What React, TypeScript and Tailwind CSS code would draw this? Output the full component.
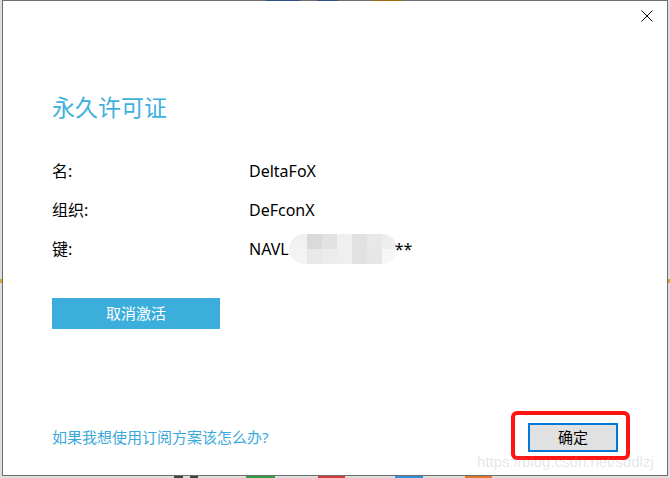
const FONT = { fontFamily: '"Noto Sans", "Noto Sans CJK SC", sans-serif' };

const BLUR_TOP = ["#f1f1f0", "#d9dadc", "#e3e2e2", "#f0f0f0", "#e2e1e2", "#e9e8e9", "#eeeeee"];
const BLUR_BOT = ["#f3f3f3", "#e7e8e9", "#ececec", "#efefef", "#e1e1e2", "#e6e6e6", "#f7f7f7"];

function BlurBlock() {
  return (
    <div className="flex flex-col w-[108px] h-[30px] rounded-[15px] overflow-hidden">
      <div className="flex h-[15px]">
        <div className="w-[18px]" style={{ background: BLUR_TOP[0] }} />
        {BLUR_TOP.slice(1).map((c, i) => (
          <div key={i} className="w-[15px]" style={{ background: c }} />
        ))}
      </div>
      <div className="flex h-[15px]">
        <div className="w-[18px]" style={{ background: BLUR_BOT[0] }} />
        {BLUR_BOT.slice(1).map((c, i) => (
          <div key={i} className="w-[15px]" style={{ background: c }} />
        ))}
      </div>
    </div>
  );
}

export default function App() {
  return (
    <div className="relative w-[670px] h-[478px] bg-[#dedede] overflow-hidden flex" style={FONT}>
      {/* desktop bits peeking around the window */}
      <div className="absolute left-0 top-[279px] w-[3px] h-[4px] bg-[#d9a23a]" />
      <div className="absolute right-0 top-[279px] w-[3px] h-[4px] bg-[#d9a23a]" />
      <div className="absolute top-[476px] left-[174px] w-[9px] h-[2px] bg-[#404040]" />
      <div className="absolute top-[476px] left-[190px] w-[8px] h-[2px] bg-[#404040]" />
      <div className="absolute top-[476px] left-[246px] w-[29px] h-[2px] bg-[#2ea043]" />
      <div className="absolute top-[476px] left-[318px] w-[27px] h-[2px] bg-[#d33a3a]" />
      <div className="absolute top-[476px] left-[395px] w-[28px] h-[2px] bg-[#2f8fd8]" />
      <div className="absolute top-[476px] left-[465px] w-[27px] h-[2px] bg-[#e0782a]" />

      {/* dialog */}
      <div className="relative ml-[2px] w-[666px] h-[476px] bg-white border border-[#6e6e6e] flex flex-col">
        <div className="absolute -top-px left-[263px] w-[34px] h-[1px] bg-[#2f4f8a]" />
        <div className="absolute -top-px left-[314px] w-[21px] h-[1px] bg-[#2f4f8a]" />
        <div className="absolute -top-px left-[369px] w-[30px] h-[1px] bg-[#9a6a10]" />

        {/* close */}
        <div className="flex justify-end pr-[14px] pt-[9px]">
          <svg width="12" height="12" viewBox="0 0 12 12">
            <path d="M0.5 0.5 L11.5 11.5 M11.5 0.5 L0.5 11.5" stroke="#000" strokeWidth="1" />
          </svg>
        </div>

        <div className="flex flex-col flex-1 pl-[49px]">
          <h1 className="mt-[70px] text-[23px] leading-[30px] text-[#3eb0dd] font-normal">永久许可证</h1>

          <div className="mt-[29px] flex flex-col text-[16px] text-black">
            <div className="flex items-center h-[39px]">
              <span className="w-[197px]">名:</span>
              <span>DeltaFoX</span>
            </div>
            <div className="flex items-center h-[39px]">
              <span className="w-[197px]">组织:</span>
              <span>DeFconX</span>
            </div>
            <div className="flex items-center h-[39px]">
              <span className="w-[197px]">键:</span>
              <span>NAVL</span>
              <BlurBlock />
              <span className="-ml-[2px]">**</span>
            </div>
          </div>

          <button className="mt-[30px] w-[168px] h-[31px] bg-[#3baedc] text-white text-[15px] leading-none flex items-center justify-center">
            取消激活
          </button>

          <div className="flex-1" />

          <div className="flex justify-between items-start pr-[37px] mb-[15px]">
            <a className="mt-[16px] text-[15px] leading-[21px] text-[#3ba9da]">如果我想使用订阅方案该怎么办?</a>
            <div className="w-[119px] h-[49px] border-4 border-[#ff1414] rounded-[6px] pl-[13px] pt-[8px]">
              <button className="w-[90px] h-[29px] border-2 border-[#0078d7] bg-[#e1e1e1] text-[15px] text-black leading-none flex items-center justify-center">
                确定
              </button>
            </div>
          </div>
        </div>
      </div>

      {/* watermark */}
      <div
        className="absolute left-[477px] top-[452px] text-[15px] leading-[20px] text-[rgba(150,150,150,0.25)]"
        style={{ fontFamily: '"Liberation Sans", Arial, sans-serif' }}
      >
        https://blog.csdn.net/sddlzj
      </div>
    </div>
  );
}
